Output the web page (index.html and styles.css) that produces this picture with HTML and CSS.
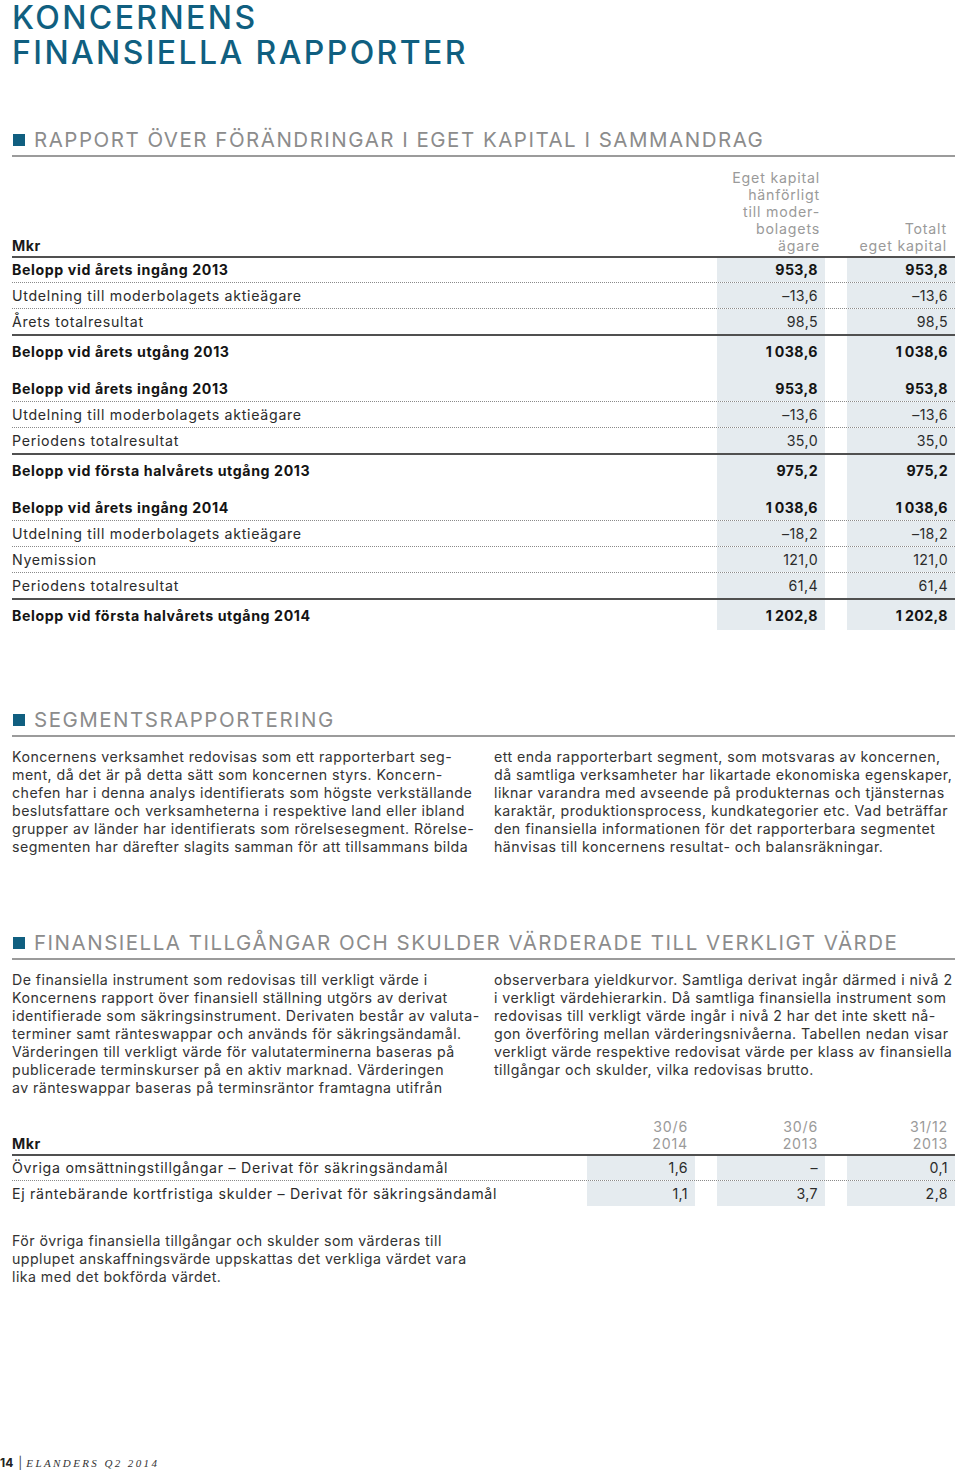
FILE: index.html
```html
<!DOCTYPE html>
<html lang="sv">
<head>
<meta charset="utf-8">
<title>Koncernens finansiella rapporter</title>
<link rel="stylesheet" href="styles.css">
</head>
<body>
<div class="page">
  <h1 class="title">KONCERNENS<br>FINANSIELLA RAPPORTER</h1>

  <section class="sec sec-equity">
    <h2 class="sec-h"><span class="sq"></span>RAPPORT ÖVER FÖRÄNDRINGAR I EGET KAPITAL I SAMMANDRAG</h2>
    <div class="tbl">
      <div class="t-head">
        <div class="lbl">Mkr</div>
        <div class="hcol">Eget kapital<br>hänförligt<br>till moder-<br>bolagets<br>ägare</div>
        <div class="hcol">Totalt<br>eget kapital</div>
      </div>
      <div class="t-row b"><div class="lbl">Belopp vid årets ingång 2013</div><div class="val">953,8</div><div class="val">953,8</div></div>
      <div class="t-row"><div class="lbl">Utdelning till moderbolagets aktieägare</div><div class="val">–13,6</div><div class="val">–13,6</div></div>
      <div class="t-row solid"><div class="lbl">Årets totalresultat</div><div class="val">98,5</div><div class="val">98,5</div></div>
      <div class="t-row b sum"><div class="lbl">Belopp vid årets utgång 2013</div><div class="val">1&#8201;038,6</div><div class="val">1&#8201;038,6</div></div>
      <div class="t-row b"><div class="lbl">Belopp vid årets ingång 2013</div><div class="val">953,8</div><div class="val">953,8</div></div>
      <div class="t-row"><div class="lbl">Utdelning till moderbolagets aktieägare</div><div class="val">–13,6</div><div class="val">–13,6</div></div>
      <div class="t-row solid"><div class="lbl">Periodens totalresultat</div><div class="val">35,0</div><div class="val">35,0</div></div>
      <div class="t-row b sum"><div class="lbl">Belopp vid första halvårets utgång 2013</div><div class="val">975,2</div><div class="val">975,2</div></div>
      <div class="t-row b"><div class="lbl">Belopp vid årets ingång 2014</div><div class="val">1&#8201;038,6</div><div class="val">1&#8201;038,6</div></div>
      <div class="t-row"><div class="lbl">Utdelning till moderbolagets aktieägare</div><div class="val">–18,2</div><div class="val">–18,2</div></div>
      <div class="t-row"><div class="lbl">Nyemission</div><div class="val">121,0</div><div class="val">121,0</div></div>
      <div class="t-row solid"><div class="lbl">Periodens totalresultat</div><div class="val">61,4</div><div class="val">61,4</div></div>
      <div class="t-row b sum last"><div class="lbl">Belopp vid första halvårets utgång 2014</div><div class="val">1&#8201;202,8</div><div class="val">1&#8201;202,8</div></div>
    </div>
  </section>

  <section class="sec sec-segment">
    <h2 class="sec-h"><span class="sq"></span>SEGMENTSRAPPORTERING</h2>
    <div class="cols">
      <p>Koncernens verksamhet redovisas som ett rapporterbart seg-<br>ment, då det är på detta sätt som koncernen styrs. Koncern-<br>chefen har i denna analys identifierats som högste verkställande<br>beslutsfattare och verksamheterna i respektive land eller ibland<br>grupper av länder har identifierats som rörelsesegment. Rörelse-<br>segmenten har därefter slagits samman för att tillsammans bilda</p>
      <p>ett enda rapporterbart segment, som motsvaras av koncernen,<br>då samtliga verksamheter har likartade ekonomiska egenskaper,<br>liknar varandra med avseende på produkternas och tjänsternas<br>karaktär, produktionsprocess, kundkategorier etc. Vad beträffar<br>den finansiella informationen för det rapporterbara segmentet<br>hänvisas till koncernens resultat- och balansräkningar.</p>
    </div>
  </section>

  <section class="sec sec-fin">
    <h2 class="sec-h"><span class="sq"></span>FINANSIELLA TILLGÅNGAR OCH SKULDER VÄRDERADE TILL VERKLIGT VÄRDE</h2>
    <div class="cols">
      <p>De finansiella instrument som redovisas till verkligt värde i<br>Koncernens rapport över finansiell ställning utgörs av derivat<br>identifierade som säkringsinstrument. Derivaten består av valuta-<br>terminer samt ränteswappar och används för säkringsändamål.<br>Värderingen till verkligt värde för valutaterminerna baseras på<br>publicerade terminskurser på en aktiv marknad. Värderingen<br>av ränteswappar baseras på terminsräntor framtagna utifrån</p>
      <p>observerbara yieldkurvor. Samtliga derivat ingår därmed i nivå 2<br>i verkligt värdehierarkin. Då samtliga finansiella instrument som<br>redovisas till verkligt värde ingår i nivå 2 har det inte skett nå-<br>gon överföring mellan värderingsnivåerna. Tabellen nedan visar<br>verkligt värde respektive redovisat värde per klass av finansiella<br>tillgångar och skulder, vilka redovisas brutto.</p>
    </div>

    <div class="tbl tbl2">
      <div class="t-head">
        <div class="lbl">Mkr</div>
        <div class="hcol">30/6<br>2014</div>
        <div class="hcol">30/6<br>2013</div>
        <div class="hcol">31/12<br>2013</div>
      </div>
      <div class="t-row"><div class="lbl">Övriga omsättningstillgångar – Derivat för säkringsändamål</div><div class="val">1,6</div><div class="val">–</div><div class="val">0,1</div></div>
      <div class="t-row last"><div class="lbl">Ej räntebärande kortfristiga skulder – Derivat för säkringsändamål</div><div class="val">1,1</div><div class="val">3,7</div><div class="val">2,8</div></div>
    </div>

    <p class="note">För övriga finansiella tillgångar och skulder som värderas till<br>upplupet anskaffningsvärde uppskattas det verkliga värdet vara<br>lika med det bokförda värdet.</p>
  </section>

  <footer class="foot"><span class="pg">14</span><span class="bar">|</span><span class="pub">ELANDERS Q2 2014</span></footer>
</div>
</body>
</html>
```

FILE: styles.css
```css
html, body {
  margin: 0;
  padding: 0;
  background: #fff;
}

.page {
  width: 960px;
  box-sizing: border-box;
  padding: 0 5px 0 12px;
  font-family: "Inter", "Open Sans", sans-serif;
  color: #2b2b2b;
  font-size: 14.2px;
}

.title {
  margin: 0;
  font-size: 32px;
  line-height: 35px;
  font-weight: 500;
  color: #105f80;
  letter-spacing: 2.4px;
}

.sec-h {
  display: flex;
  align-items: center;
  gap: 9px;
  margin: 0;
  padding: 0 0 3px 1px;
  border-bottom: 2px solid #9b9b9b;
  font-size: 20.5px;
  line-height: 24px;
  font-weight: 400;
  color: #8c8c8c;
  letter-spacing: 1.5px;
  white-space: nowrap;
}

.sq {
  width: 12px;
  height: 12px;
  background: #105f80;
  flex: none;
}

.sec-equity { margin-top: 58px; }
.sec-segment { margin-top: 78px; }
.sec-fin { margin-top: 75px; }

/* tables */
.tbl { margin-top: 12px; }

.t-head {
  display: flex;
  align-items: flex-end;
  border-bottom: 2px solid #505050;
  padding-bottom: 2px;
}

.t-head .lbl {
  flex: 1;
  font-weight: 700;
  line-height: 17px;
  color: #1a1a1a;
  letter-spacing: 0.5px;
}

.hcol {
  width: 108px;
  margin-left: 22px;
  box-sizing: border-box;
  padding-right: 5px;
  text-align: right;
  line-height: 17px;
  color: #9a9a9a;
  letter-spacing: 0.8px;
}

.hcol:last-child { padding-right: 8px; }
.tbl2 .hcol { padding-right: 7px; }

.t-row {
  display: flex;
  border-bottom: 1px dotted #8a8a8a;
}

.t-row > div {
  line-height: 25px;
  white-space: nowrap;
  letter-spacing: 0.7px;
}

.t-head + .t-row > div { line-height: 24px; }

.t-row.b > div { letter-spacing: 0.6px; }

.t-row .lbl { flex: 1; }

.val {
  width: 108px;
  margin-left: 22px;
  box-sizing: border-box;
  padding-right: 7px;
  text-align: right;
  background: #e5ebef;
}

.t-row > .val, .t-row.b > .val { letter-spacing: 0.4px; }

.t-row.b { font-weight: 700; color: #141414; }

.t-row.solid { border-bottom: 2px solid #505050; }

.t-row.sum { border-bottom: none; }
.t-row.sum > div { padding-top: 3px; padding-bottom: 12px; }
.t-row.sum.last > div { padding-bottom: 2px; }

.t-row.last { border-bottom: none; }

/* paragraphs */
.cols {
  display: flex;
  gap: 22px;
  margin-top: 11px;
}

.cols p {
  margin: 0;
  width: 460px;
  line-height: 18px;
  white-space: nowrap;
  color: #333;
  letter-spacing: 0.45px;
}

.tbl2 { margin-top: 21px; }

.note {
  margin: 26px 0 0 0;
  line-height: 18px;
  color: #333;
  letter-spacing: 0.45px;
}

.foot {
  margin: 170px 0 0 -12px;
  display: flex;
  align-items: baseline;
  line-height: 14px;
  height: 15px;
}

.pg {
  font-family: "Inter", sans-serif;
  font-weight: 700;
  font-size: 12px;
  color: #222;
}

.bar {
  margin: 0 4px 0 5px;
  font-size: 12px;
  color: #444;
}

.pub {
  font-family: "Liberation Serif", serif;
  font-style: italic;
  font-size: 11px;
  letter-spacing: 2.4px;
  color: #333;
}
```
